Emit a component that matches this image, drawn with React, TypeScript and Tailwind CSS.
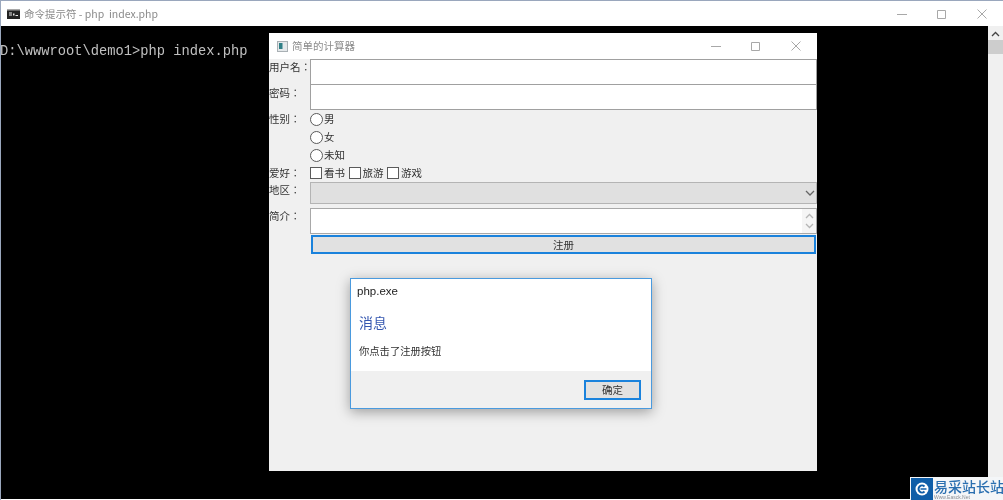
import type { FC } from 'react';

const cjk = "font-['Noto_Sans_CJK_SC','Noto_Sans',sans-serif]";

const WindowButtons: FC = () => (
    <div className="flex items-center gap-[30px] pr-[16px]">
        <svg width="10" height="10" viewBox="0 0 10 10" fill="none" stroke="#a8a8a8">
            <path d="M0 5.5h10" />
        </svg>
        <svg width="10" height="10" viewBox="0 0 10 10" fill="none" stroke="#a8a8a8">
            <path d="M0.5 1.5h8v8h-8z" />
        </svg>
        <svg width="10" height="10" viewBox="0 0 10 10" fill="none" stroke="#a8a8a8">
            <path d="M0.5 0.5l9 9M9.5 0.5l-9 9" />
        </svg>
    </div>
);

const Radio: FC<{ label: string }> = ({ label }) => (
    <div className="flex h-[18px] items-center">
        <span className="h-[13px] w-[13px] rounded-full border border-[#5a5a5a] bg-white" />
        <span className="ml-[1px]">{label}</span>
    </div>
);

const Check: FC<{ label: string }> = ({ label }) => (
    <div className="flex items-center">
        <span className="h-[12px] w-[12px] border border-[#5a5a5a] bg-white" />
        <span className="ml-[2px]">{label}</span>
    </div>
);

// TC face: its full-width colon sits centred, like the one in the picture
const Label: FC<{ text: string; className?: string }> = ({ text, className = 'pt-[1px]' }) => (
    <div className={`w-[41px] shrink-0 whitespace-nowrap font-['Noto_Sans_CJK_TC','Noto_Sans',sans-serif] ${className}`}>{text}</div>
);

const FormWindow: FC = () => (
    <div className={`absolute left-[269px] top-[33px] flex h-[438px] w-[548px] flex-col bg-[#f0f0f0] text-[10.5px] leading-[14px] text-[#333] ${cjk}`}>
        <div className="flex h-[26px] shrink-0 items-center justify-between bg-white">
            <div className="flex items-center pl-[8px] text-[#8c8c8c]">
                <svg width="11" height="11" viewBox="0 0 11 11">
                    <rect x="0.5" y="0.5" width="10" height="10" fill="#e4e8ea" stroke="#a9b0b4" />
                    <rect x="2" y="2" width="3.5" height="6" fill="#2f7f86" />
                </svg>
                <span className="ml-[4px]">简单的计算器</span>
            </div>
            <WindowButtons />
        </div>
        <div className="flex h-[25px] shrink-0">
            <Label text="用户名：" />
            <div className="h-[26px] flex-1 border-[1.5px] border-[#a0a0a0] bg-white" />
        </div>
        <div className="flex h-[26px] shrink-0">
            <Label text="密码：" className="pt-[2px]" />
            <div className="h-[26px] flex-1 border-[1.5px] border-[#a0a0a0] bg-white" />
        </div>
        <div className="flex h-[54px] shrink-0">
            <Label text="性别：" className="pt-[2px]" />
            <div className="flex flex-col">
                <Radio label="男" />
                <Radio label="女" />
                <Radio label="未知" />
            </div>
        </div>
        <div className="flex h-[18px] shrink-0 items-center">
            <Label text="爱好：" className="" />
            <div className="flex items-center gap-[3.5px]">
                <Check label="看书" />
                <Check label="旅游" />
                <Check label="游戏" />
            </div>
        </div>
        <div className="flex h-[26px] shrink-0">
            <Label text="地区：" />
            <div className="flex h-[22px] flex-1 items-center justify-end border-[1.5px] border-[#b4b4b4] bg-[#e0e0e0] pr-[1px]">
                <svg width="10" height="6" viewBox="0 0 10 6" fill="none" stroke="#666" strokeWidth="1.3">
                    <path d="M1 1l4 4 4-4" />
                </svg>
            </div>
        </div>
        <div className="flex h-[26px] shrink-0">
            <Label text="简介：" />
            <div className="flex h-[26px] flex-1 justify-end border-[1.5px] border-[#a8a8a8] bg-white">
                <div className="flex w-[14px] flex-col items-center justify-around bg-[#f5f5f5] py-[2px]">
                    <svg width="9" height="6" viewBox="0 0 9 6" fill="none" stroke="#b5b5b5" strokeWidth="1.3">
                        <path d="M1 5l3.5-3.5L8 5" />
                    </svg>
                    <svg width="9" height="6" viewBox="0 0 9 6" fill="none" stroke="#b5b5b5" strokeWidth="1.3">
                        <path d="M1 1l3.5 3.5L8 1" />
                    </svg>
                </div>
            </div>
        </div>
        <div className="mt-[1px] flex h-[19px] shrink-0">
            <div className="w-[42px] shrink-0" />
            <button className="mr-[1px] flex-1 border-2 border-[#1a82dc] bg-[#e1e1e1] text-[#333]">注册</button>
        </div>
    </div>
);

const MessageDialog: FC = () => (
    <div className={`absolute left-[350px] top-[278px] flex h-[131px] w-[302px] flex-col border border-[#4a9ade] bg-white shadow-[0_3px_12px_rgba(0,0,0,0.35)] ${cjk}`}>
        <div className="h-[92px] shrink-0 px-[6px] pt-[4px]">
            <div className="text-[11.5px] leading-[16px] text-[#222] font-['Liberation_Sans','Noto_Sans_CJK_SC',sans-serif]">php.exe</div>
            <div className="mt-[13px] pl-[2px] text-[14px] leading-[20px] text-[#3557b0]">消息</div>
            <div className="mt-[12px] pl-[2px] text-[10.3px] leading-[14px] text-[#333]">你点击了注册按钮</div>
        </div>
        <div className="flex flex-1 items-center justify-end bg-[#f0f0f0] pr-[10px]">
            <button className="h-[20px] w-[57px] border-2 border-[#1a82dc] bg-[#e1e1e1] text-[10.5px] leading-[14px] text-[#333]">确定</button>
        </div>
    </div>
);

const Watermark: FC = () => (
    <div className="absolute right-0 top-[477px] flex h-[23px] w-[93px] items-center bg-[#f4f6f8]">
        <div className="ml-[1px] mt-[1px] flex h-[22px] w-[22px] shrink-0 items-center justify-center bg-[#0f5ea8]">
            <svg width="14" height="14" viewBox="0 0 14 14">
                <circle cx="7" cy="7" r="6.5" fill="#fff" />
                <path d="M9.5 4.5A3.5 3.5 0 1 0 9.5 9.5" fill="none" stroke="#0f5ea8" strokeWidth="2" />
                <path d="M5.5 7h6" stroke="#0f5ea8" strokeWidth="1.5" />
            </svg>
        </div>
        <div className="ml-[1px] flex flex-col pt-[1px]">
            <span className={`whitespace-nowrap text-[14px] font-medium leading-[16px] text-[#2a6fb0] ${cjk}`}>易采站长站</span>
            <span className="whitespace-nowrap text-[5px] leading-[6px] text-[#8a8f96] font-['Liberation_Sans',sans-serif]">Www.Easck.Net</span>
        </div>
    </div>
);

export default function App() {
    return (
        <div className="relative h-[500px] w-[1003px] overflow-hidden bg-white blur-[0.4px]">
            <div className="flex h-full w-full flex-col border-l border-t border-[#9aa7bd] pb-[1px]">
                <div className="flex h-[25px] shrink-0 items-center justify-between bg-white">
                    <div className={`flex items-center pl-[6px] text-[10.5px] text-[#8a8a8a] ${cjk}`}>
                        <svg width="13" height="10" viewBox="0 0 13 10">
                            <rect width="13" height="10" fill="#222" />
                            <rect width="13" height="1.5" fill="#a8a8a8" />
                            <path d="M2 3.5h3v1h-3zM2 5.5h3v1h-3zM6 4.5h1.5v2h-1.5zM8.5 6h2.5v1h-2.5z" fill="#e8e8e8" />
                        </svg>
                        <span className="ml-[4px] whitespace-pre">命令提示符 - php  index.php</span>
                    </div>
                    <WindowButtons />
                </div>
                <div className="flex flex-1 bg-black">
                    <div className="flex-1 pt-[16px] font-['Liberation_Mono',monospace] text-[13.75px] leading-[20px] text-[#c0c0c0]">
                        <span className="-ml-[1px] block whitespace-pre">D:\wwwroot\demo1&gt;php index.php</span>
                    </div>
                    <div className="flex w-[15px] shrink-0 flex-col items-center bg-[#f0f0f0]">
                        <svg className="mt-[5px]" width="9" height="6" viewBox="0 0 9 6" fill="none" stroke="#444" strokeWidth="1.3">
                            <path d="M1 5l3.5-3.5L8 5" />
                        </svg>
                        <div className="mt-[3px] h-[14px] w-full bg-[#cdcdcd]" />
                    </div>
                </div>
            </div>
            <FormWindow />
            <MessageDialog />
            <Watermark />
        </div>
    );
}
